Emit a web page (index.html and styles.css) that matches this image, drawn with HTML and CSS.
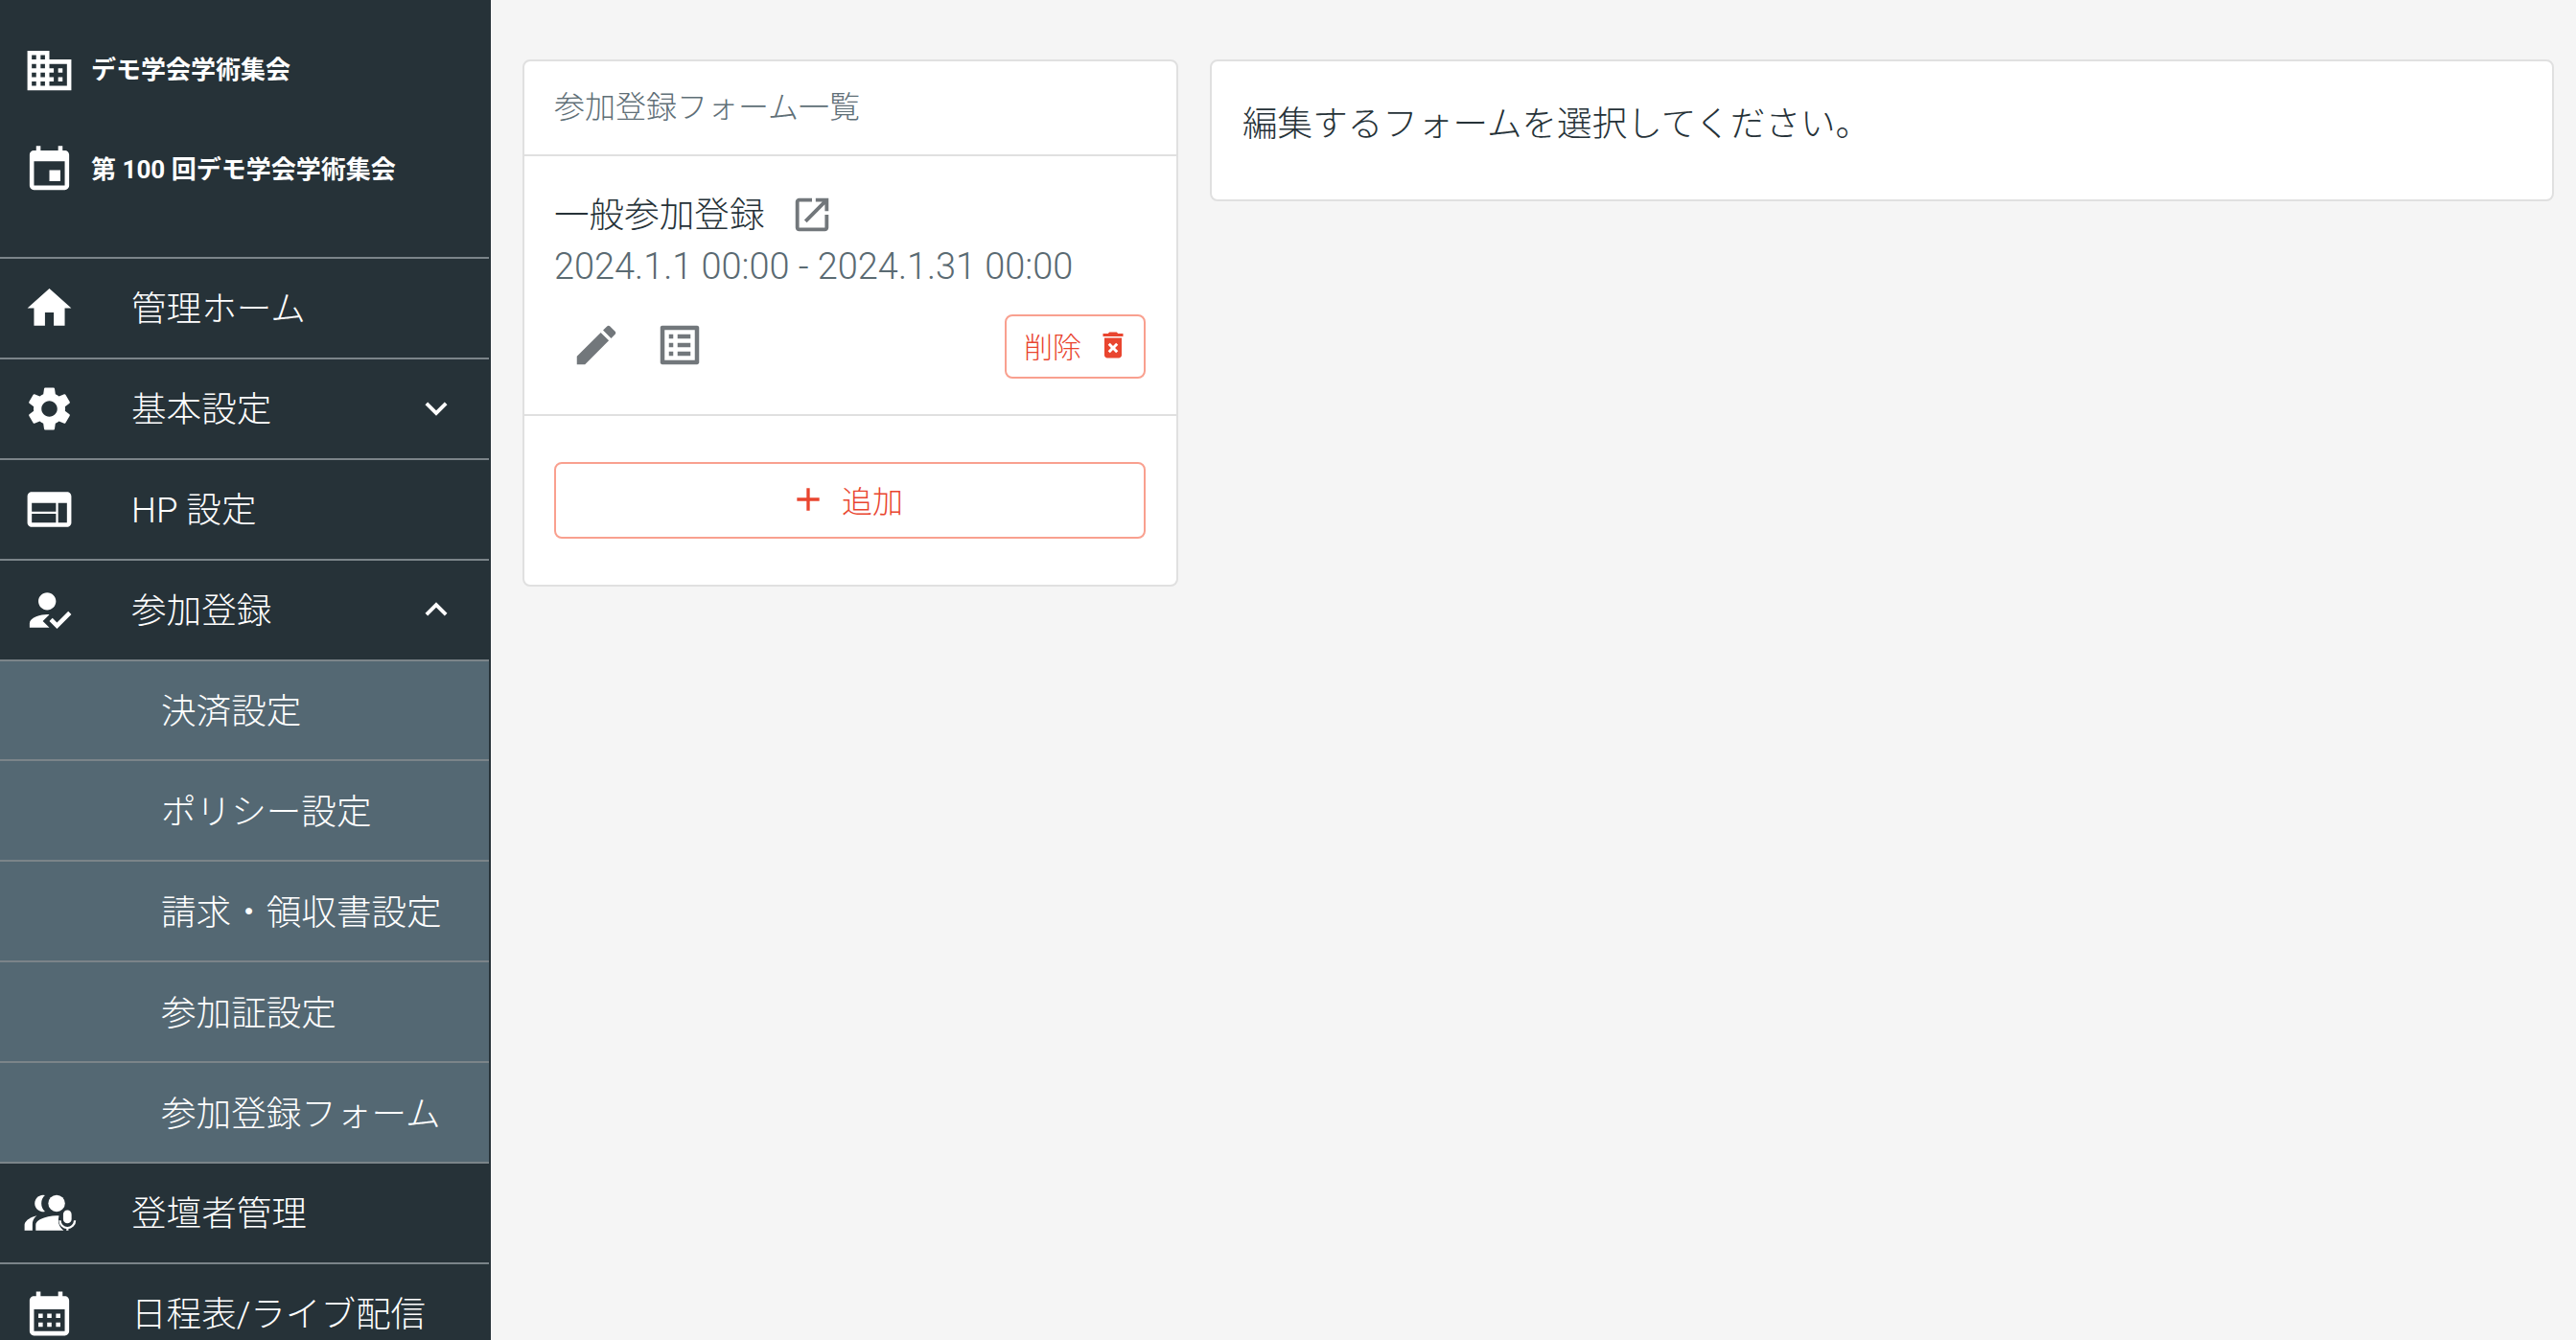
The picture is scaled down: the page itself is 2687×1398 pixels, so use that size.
FILE: index.html
```html
<!DOCTYPE html>
<html lang="ja">
<head>
    <meta charset="UTF-8">
    <title>参加登録フォーム一覧</title>
    <link rel="stylesheet" href="styles.css">
</head>
<body>
    <aside class="sidebar">
        <div class="org">
            <div class="org-row">
                <svg class="icon" viewBox="0 0 24 24"><path d="M12 7V3H2v18h20V7H12zM6 19H4v-2h2v2zm0-4H4v-2h2v2zm0-4H4V9h2v2zm0-4H4V5h2v2zm4 12H8v-2h2v2zm0-4H8v-2h2v2zm0-4H8V9h2v2zm0-4H8V5h2v2zm10 12h-8v-2h2v-2h-2v-2h2v-2h-2V9h8v10zm-2-8h-2v2h2v-2zm0 4h-2v2h2v-2z"/></svg>
                <span>デモ学会学術集会</span>
            </div>
            <div class="org-row">
                <svg class="icon" viewBox="0 0 24 24"><path d="M17 12h-5v5h5v-5zM16 1v2H8V1H6v2H5c-1.11 0-1.99.9-1.99 2L3 19c0 1.1.89 2 2 2h14c1.1 0 2-.9 2-2V5c0-1.1-.9-2-2-2h-1V1h-2zm3 18H5V8h14v11z"/></svg>
                <span>第 100 回デモ学会学術集会</span>
            </div>
        </div>
        <nav class="nav">
            <a class="nav-item">
                <svg class="icon" viewBox="0 0 24 24"><path d="M10 20v-6h4v6h5v-8h3L12 3 2 12h3v8z"/></svg>
                <span class="nav-label">管理ホーム</span>
            </a>
            <a class="nav-item">
                <svg class="icon" viewBox="0 0 24 24"><path d="M19.14 12.94c.04-.3.06-.61.06-.94 0-.32-.02-.64-.07-.94l2.03-1.58c.18-.14.23-.41.12-.61l-1.92-3.32c-.12-.22-.37-.29-.59-.22l-2.39.96c-.5-.38-1.03-.7-1.62-.94l-.36-2.54c-.04-.24-.24-.41-.48-.41h-3.84c-.24 0-.43.17-.47.41l-.36 2.54c-.59.24-1.13.57-1.62.94l-2.39-.96c-.22-.08-.47 0-.59.22L2.74 8.87c-.12.21-.08.47.12.61l2.03 1.58c-.05.3-.09.63-.09.94s.02.64.07.94l-2.03 1.58c-.18.14-.23.41-.12.61l1.92 3.32c.12.22.37.29.59.22l2.39-.96c.5.38 1.03.7 1.62.94l.36 2.54c.05.24.24.41.48.41h3.84c.24 0 .44-.17.47-.41l.36-2.54c.59-.24 1.13-.56 1.62-.94l2.39.96c.22.08.47 0 .59-.22l1.92-3.32c.12-.22.07-.47-.12-.61l-2.01-1.58zM12 15.6c-1.98 0-3.6-1.62-3.6-3.6s1.62-3.6 3.6-3.6 3.6 1.62 3.6 3.6-1.62 3.6-3.6 3.6z"/></svg>
                <span class="nav-label">基本設定</span>
                <svg class="chevron" viewBox="0 0 24 24"><path d="M7.41 8.59L12 13.17l4.59-4.58L18 10l-6 6-6-6 1.41-1.41z"/></svg>
            </a>
            <a class="nav-item">
                <svg class="icon" viewBox="0 0 24 24"><path d="M20 4H4c-1.1 0-1.99.9-1.99 2L2 18c0 1.1.9 2 2 2h16c1.1 0 2-.9 2-2V6c0-1.1-.9-2-2-2zm-5 14H4v-4h11v4zm0-5H4V9h11v4zm5 5h-4V9h4v9z"/></svg>
                <span class="nav-label">HP 設定</span>
            </a>
            <a class="nav-item">
                <svg class="icon" viewBox="0 0 24 24"><path d="M9 17l3-2.94c-.39-.04-.68-.06-1-.06-2.67 0-8 1.34-8 4v2h9l-3-3zm2-5c2.21 0 4-1.79 4-4s-1.79-4-4-4-4 1.79-4 4 1.79 4 4 4m4.47 8.5L12 17l1.4-1.41 2.07 2.08 5.13-5.17 1.4 1.41z"/></svg>
                <span class="nav-label">参加登録</span>
                <svg class="chevron" viewBox="0 0 24 24"><path d="M7.41 15.41L12 10.83l4.59 4.58L18 14l-6-6-6 6z"/></svg>
            </a>
            <a class="nav-item sub">決済設定</a>
            <a class="nav-item sub">ポリシー設定</a>
            <a class="nav-item sub">請求・領収書設定</a>
            <a class="nav-item sub">参加証設定</a>
            <a class="nav-item sub">参加登録フォーム</a>
            <a class="nav-item">
                <svg class="icon" viewBox="0 0 24 24">
                    <circle cx="15.3" cy="7.6" r="3.8"/>
                    <path d="M10 3.9a3.8 3.8 0 1 0 0 7.4 5 5 0 0 1 0-7.4z"/>
                    <path d="M.7 20v-2.4c0-2 2.4-3.6 5.6-4.4-1.4 1-2 2.4-2 4V20z"/>
                    <path d="M5.8 20v-2.6c0-2.6 5.6-4.2 9.4-4.2.5 0 .9 0 1.2.1-.2.6-.3 1.3-.3 2.1 0 1.9 1 3.5 2.4 4.6z"/>
                    <rect x="18.3" y="10.7" width="3.8" height="6" rx="1.9"/>
                    <path class="mic-arc" d="M16.8 15.4a3.4 3.4 0 0 0 6.8 0M20.2 18.8V20"/>
                </svg>
                <span class="nav-label">登壇者管理</span>
            </a>
            <a class="nav-item">
                <svg class="icon" viewBox="0 0 24 24"><path d="M19 4h-1V2h-2v2H8V2H6v2H5c-1.1 0-2 .9-2 2v14c0 1.1.9 2 2 2h14c1.1 0 2-.9 2-2V6c0-1.1-.9-2-2-2zm0 16H5V10h14v10zM9 14H7v-2h2v2zm4 0h-2v-2h2v2zm4 0h-2v-2h2v2zm-8 4H7v-2h2v2zm4 0h-2v-2h2v2zm4 0h-2v-2h2v2z"/></svg>
                <span class="nav-label">日程表/ライブ配信</span>
            </a>
        </nav>
    </aside>

    <main class="main">
        <section class="card form-list">
            <div class="card-head">参加登録フォーム一覧</div>
            <div class="form-item">
                <div class="form-title">
                    <span class="form-name">一般参加登録</span>
                    <svg class="open-icon" viewBox="0 0 24 24"><path d="M19 19H5V5h7V3H5c-1.11 0-2 .9-2 2v14c0 1.1.89 2 2 2h14c1.1 0 2-.9 2-2v-7h-2v7zM14 3v2h3.59l-9.83 9.83 1.41 1.41L19 6.41V10h2V3h-7z"/></svg>
                </div>
                <div class="form-date">2024.1.1 00:00 - 2024.1.31 00:00</div>
                <div class="form-actions">
                    <svg class="action-icon" viewBox="0 0 24 24"><path d="M3 17.25V21h3.75L17.81 9.94l-3.75-3.75L3 17.25zM20.71 7.04c.39-.39.39-1.02 0-1.41l-2.34-2.34c-.39-.39-1.02-.39-1.41 0l-1.83 1.83 3.75 3.75 1.83-1.83z"/></svg>
                    <svg class="action-icon" viewBox="0 0 24 24"><path d="M19 5v14H5V5h14m1.1-2H3.9c-.5 0-.9.4-.9.9v16.2c0 .4.4.9.9.9h16.2c.4 0 .9-.5.9-.9V3.9c0-.5-.5-.9-.9-.9zM11 7h6v2h-6V7zm0 4h6v2h-6v-2zm0 4h6v2h-6zM7 7h2v2H7zm0 4h2v2H7zm0 4h2v2H7z"/></svg>
                    <button class="btn-delete">
                        <span>削除</span>
                        <svg viewBox="0 0 24 24"><path d="M6 19c0 1.1.9 2 2 2h8c1.1 0 2-.9 2-2V7H6v12zm2.46-7.12l1.41-1.41L12 12.59l2.12-2.12 1.41 1.41L13.41 14l2.12 2.12-1.41 1.41L12 15.41l-2.12 2.12-1.41-1.41L10.59 14l-2.13-2.12zM15.5 4l-1-1h-5l-1 1H5v2h14V4z"/></svg>
                    </button>
                </div>
            </div>
            <div class="form-add">
                <button class="btn-add">
                    <svg viewBox="0 0 24 24"><path d="M19 13h-6v6h-2v-6H5v-2h6V5h2v6h6v2z"/></svg>
                    <span>追加</span>
                </button>
            </div>
        </section>
        <section class="card editor">
            <p>編集するフォームを選択してください。</p>
        </section>
    </main>
</body>
</html>
```

FILE: styles.css
```css
* {
    box-sizing: border-box;
}
html, body {
    height: 100%;
}
body {
    margin: 0;
    display: flex;
    overflow: hidden;
    background-color: #f5f5f5;
    color: #263238;
    font-family: Roboto, "Noto Sans CJK JP", sans-serif;
    font-weight: 300;
}
svg {
    display: block;
    flex: none;
    fill: currentColor;
}

/* Sidebar */
.sidebar {
    flex: none;
    width: 512px;
    height: 100vh;
    overflow: hidden;
    padding-right: 2px;
    background-color: #263238;
    color: #fff;
}
.org {
    display: flex;
    flex-direction: column;
    gap: 49px;
    height: 268px;
    padding: 46px 0 0 24px;
    font-size: 26px;
    font-weight: 700;
}
.org-row {
    display: flex;
    align-items: center;
    gap: 16px;
}
.org-row span {
    padding-bottom: 6px;
}
.icon {
    width: 55px;
    height: 55px;
    overflow: visible;
}
.mic-arc {
    fill: none;
    stroke: currentColor;
    stroke-width: 1;
}
.nav-item {
    display: flex;
    align-items: center;
    height: 104.9px;
    padding-left: 24px;
    border-top: 2px solid #7b8489;
    font-size: 36.6px;
}
.nav-label {
    margin-left: 58px;
    padding-bottom: 3px;
}
.chevron {
    width: 46px;
    height: 46px;
    margin-left: auto;
    margin-right: 32px;
}
.nav-item.sub {
    padding-left: 168px;
    padding-bottom: 3px;
    background-color: #546873;
}

/* Main */
.main {
    flex: 1;
    display: flex;
    align-items: flex-start;
    gap: 33px;
    padding: 62px 23px 0 33px;
}
.card {
    background-color: #fff;
    border: 2px solid #e0e0e0;
    border-radius: 8px;
}
.form-list {
    flex: none;
    width: 684px;
}
.editor {
    flex: 1;
    padding: 39px 32px 51px;
}
.editor p {
    margin: 0;
    font-size: 36.6px;
    line-height: 54px;
}
.card-head {
    height: 99px;
    padding-left: 31px;
    line-height: 97px;
    font-size: 32px;
    color: #5f6f77;
    border-bottom: 2px solid #e0e0e0;
}
.form-item {
    padding: 34px 32px 37px 31px;
    border-bottom: 2px solid #e0e0e0;
}
.form-title {
    display: flex;
    align-items: center;
    gap: 27px;
    height: 54px;
    font-size: 36.6px;
}
.form-name {
    padding-bottom: 6px;
}
.open-icon {
    width: 46px;
    height: 46px;
    color: #72777b;
}
.form-date {
    height: 54px;
    line-height: 54px;
    font-size: 37.9px;
    color: #5a6a72;
}
.form-actions {
    display: flex;
    align-items: center;
    gap: 33px;
    height: 67px;
    margin-top: 23px;
    padding-left: 17px;
}
.action-icon {
    width: 54px;
    height: 54px;
    margin-bottom: 3px;
    color: #72777b;
}
button {
    display: flex;
    align-items: center;
    background: #fff;
    border: 2px solid #f9a08f;
    border-radius: 8px;
    color: #e9452f;
    font-family: inherit;
    font-weight: 300;
    font-size: 30px;
}
.btn-delete {
    width: 147px;
    height: 67px;
    margin-left: auto;
    padding: 0 14px 3px 18px;
    justify-content: space-between;
}
.btn-delete svg {
    width: 36px;
    height: 36px;
}
.form-add {
    padding: 48px 32px 48px 31px;
}
.btn-add {
    width: 100%;
    height: 80px;
    justify-content: center;
    gap: 15px;
    padding: 0 8px 3px 0;
    font-size: 32px;
}
.btn-add svg {
    width: 40px;
    height: 40px;
}
```
